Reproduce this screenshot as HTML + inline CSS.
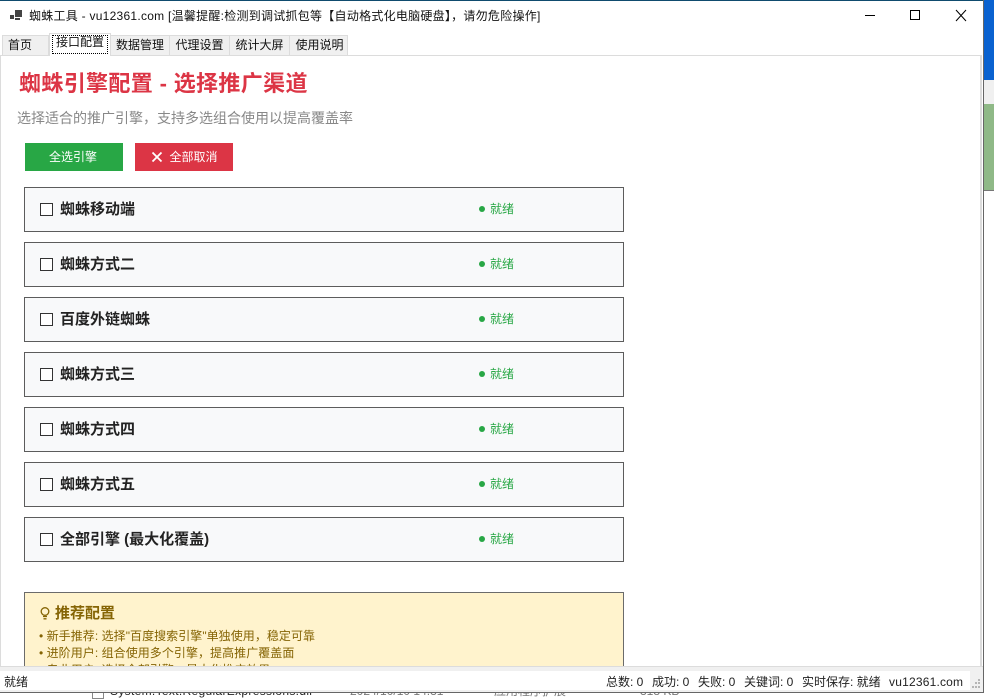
<!DOCTYPE html>
<html lang="zh"><head><meta charset="utf-8"><title>蜘蛛工具</title>
<style>
html,body{margin:0;padding:0;width:994px;height:699px;overflow:hidden;background:#fff;font-family:"Liberation Sans","Noto Sans CJK SC",sans-serif;color:#111}
div,span{position:absolute;box-sizing:border-box;white-space:nowrap}
.tab{top:35px;height:20px;background:#f0f0f0;border:1px solid #dcdcdc;border-bottom:0;font-size:12px;line-height:18px;text-align:center}
.card{left:24px;width:600px;height:45px;background:#f8f9fa;border:1px solid #5c5c5c}
.cb{left:15px;top:15px;width:13px;height:13px;border:1px solid #333;background:#fff}
.lb{left:35px;top:11px;font-size:15px;line-height:22px;font-weight:bold;color:#222}
.dot{left:454px;top:18px;width:6px;height:6px;border-radius:50%;background:#28a745}
.st{left:465px;top:12px;font-size:12px;line-height:18px;color:#28a745}
.btn{top:143px;width:98px;height:28px;color:#fff;font-size:12px;line-height:28px;text-align:center}
.tip{font-size:12px;line-height:17px;color:#856404;letter-spacing:.05px}
.sb{top:674px;font-size:12px;line-height:16px;color:#222}
.g{width:2px;height:2px;background:#b5b5b5}
</style></head><body>
<div style="left:984px;top:0;width:10px;height:80px;background:#0a62d0"></div>
<div style="left:984px;top:80px;width:10px;height:24px;background:#f0f0f0"></div>
<div style="left:984px;top:104px;width:10px;height:87px;background:#8fb987;border-bottom:1px solid #777"></div>
<div style="left:92px;top:692px;width:12px;height:7px;border:1px solid #888;background:#fff"></div>
<div style="left:110px;top:683px;font-size:12px;line-height:17px;color:#222;letter-spacing:.32px">System.Text.RegularExpressions.dll</div>
<div style="left:350px;top:683px;font-size:12px;line-height:17px;color:#777">2024/10/10 14:31</div>
<div style="left:494px;top:683px;font-size:12px;line-height:17px;color:#777">应用程序扩展</div>
<div style="left:640px;top:683px;font-size:12px;line-height:17px;color:#777">318 KB</div>

<div style="left:0;top:0;width:984px;height:693px;background:#fff;border-right:1px solid #666;border-bottom:1px solid #666;overflow:hidden">
<div style="left:0;top:0;width:984px;height:1px;background:#0f4b6e"></div>
<svg style="position:absolute;left:10px;top:10px" width="14" height="12"><rect x="0" y="5" width="4" height="4" fill="#444"/><rect x="5" y="0" width="7" height="7" fill="#444"/><rect x="5" y="8" width="5" height="2" fill="#444"/></svg>
<div style="left:29px;top:8px;font-size:12px;line-height:17px;color:#111;letter-spacing:.26px">蜘蛛工具 - vu12361.com [温馨提醒:检测到调试抓包等【自动格式化电脑硬盘】，请勿危险操作]</div>
<svg style="position:absolute;left:860px;top:8px" width="110" height="16" fill="none" stroke="#000" stroke-width="1"><path d="M5 7.500H15"/><rect x="50.500" y="2.500" width="9" height="9"/><path d="M96 2L106 13M106 2L96 13"/></svg>

<div style="left:0;top:55px;width:982px;height:613px;border:1px solid #dcdcdc;border-right:2px solid #dcdcdc"></div>
<div class="tab" style="left:2px;width:47px;text-align:left;padding-left:5px">首页</div>
<div class="tab" style="left:110px;width:60px">数据管理</div>
<div class="tab" style="left:169px;width:61px">代理设置</div>
<div class="tab" style="left:229px;width:61px">统计大屏</div>
<div class="tab" style="left:289px;width:61px;width:59px;padding-left:2px">使用说明</div>
<div class="tab" style="left:49px;width:62px;top:33px;height:23px;background:#fff;line-height:17px;z-index:2;padding-top:0"><span style="left:2px;top:1px;width:56px;height:19px;border:1px dotted #000"></span>接口配置</div>

<div style="left:19px;top:69px;font-size:22px;line-height:30px;font-weight:bold;color:#dc3545;letter-spacing:.35px">蜘蛛引擎配置 - 选择推广渠道</div>
<div style="left:17px;top:108px;font-size:14px;line-height:20px;color:#888">选择适合的推广引擎，支持多选组合使用以提高覆盖率</div>
<div class="btn" style="left:25px;background:#28a745;padding-right:2px">全选引擎</div>
<div class="btn" style="left:135px;background:#dc3545;padding-left:19px">全部取消<svg style="position:absolute;left:16px;top:8px" width="12" height="12" fill="none" stroke="#fff" stroke-width="1.800"><path d="M1.500 1.500L10.500 10.500M10.500 1.500L1.500 10.500"/></svg></div>

<div class="card" style="top:187px"><div class="cb"></div><div class="lb">蜘蛛移动端</div><div class="dot"></div><div class="st">就绪</div></div>
<div class="card" style="top:242px"><div class="cb"></div><div class="lb">蜘蛛方式二</div><div class="dot"></div><div class="st">就绪</div></div>
<div class="card" style="top:297px"><div class="cb"></div><div class="lb">百度外链蜘蛛</div><div class="dot"></div><div class="st">就绪</div></div>
<div class="card" style="top:352px"><div class="cb"></div><div class="lb">蜘蛛方式三</div><div class="dot"></div><div class="st">就绪</div></div>
<div class="card" style="top:407px"><div class="cb"></div><div class="lb">蜘蛛方式四</div><div class="dot"></div><div class="st">就绪</div></div>
<div class="card" style="top:462px"><div class="cb"></div><div class="lb">蜘蛛方式五</div><div class="dot"></div><div class="st">就绪</div></div>
<div class="card" style="top:517px"><div class="cb"></div><div class="lb">全部引擎 (最大化覆盖)</div><div class="dot"></div><div class="st">就绪</div></div>

<div style="left:24px;top:592px;width:600px;height:90px;background:#fff3cd;border:1px solid #6b6b6b"></div>
<svg style="position:absolute;left:39px;top:606px" width="12" height="15" fill="none" stroke="#856404" stroke-width="1.300"><circle cx="6" cy="5.500" r="3.800"/><path d="M4 10.500H8M4.500 12.800H7.500"/></svg>
<div style="left:55px;top:604px;font-size:15px;line-height:20px;font-weight:bold;color:#856404">推荐配置</div>
<div class="tip" style="left:39px;top:628px">• 新手推荐: 选择"百度搜索引擎"单独使用，稳定可靠</div>
<div class="tip" style="left:39px;top:645px">• 进阶用户: 组合使用多个引擎，提高推广覆盖面</div>
<div class="tip" style="left:39px;top:662px">• 专业用户: 选择全部引擎，最大化推广效果</div>

<div style="left:0;top:666px;width:983px;height:26px;background:#fff;border-top:1px solid #dcdcdc"></div>
<div style="left:0;top:666px;width:983px;height:5px;background:#f0f0f0;border-top:1px solid #dcdcdc"></div>
<div style="left:0;top:690px;width:983px;height:2px;background:#f0f0f0"></div>
<div style="left:970px;top:671px;width:13px;height:19px;background:#f0f0f0"></div>
<div class="sb" style="left:4px">就绪</div>
<div class="sb" style="left:606px">总数: 0</div>
<div class="sb" style="left:652px">成功: 0</div>
<div class="sb" style="left:698px">失败: 0</div>
<div class="sb" style="left:744px">关键词: 0</div>
<div class="sb" style="left:802px">实时保存: 就绪</div>
<div class="sb" style="left:889px;letter-spacing:.2px">vu12361.com</div>
<div class="g" style="left:978px;top:679px"></div>
<div class="g" style="left:975px;top:682px"></div><div class="g" style="left:978px;top:682px"></div>
<div class="g" style="left:972px;top:686px"></div><div class="g" style="left:975px;top:686px"></div><div class="g" style="left:978px;top:686px"></div>
</div>
</body></html>
